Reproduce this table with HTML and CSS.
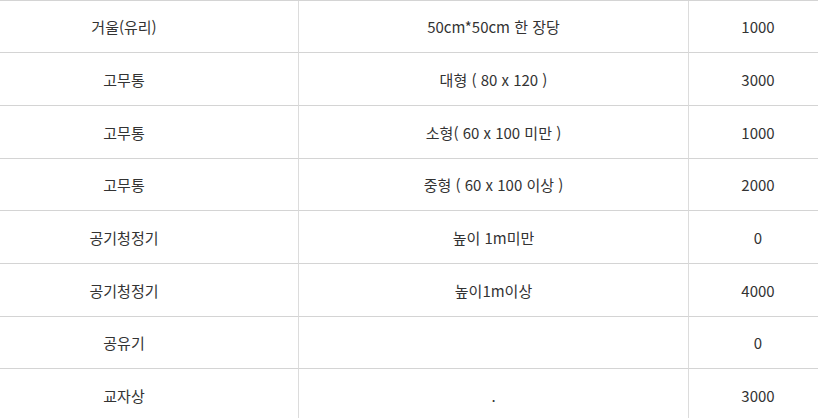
FILE: index.html
```html
<!DOCTYPE html>
<html lang="ko">
<head>
<meta charset="utf-8">
<link rel="stylesheet" href="styles.css">
</head>
<body>
<table class="price-table">
  <tbody>
    <tr class="r-short"><td class="c-name">거울(유리)</td><td class="c-desc">50cm*50cm 한 장당</td><td class="c-price">1000</td></tr>
    <tr><td class="c-name">고무통</td><td class="c-desc">대형 ( 80 x 120 )</td><td class="c-price">3000</td></tr>
    <tr><td class="c-name">고무통</td><td class="c-desc">소형( 60 x 100 미만 )</td><td class="c-price">1000</td></tr>
    <tr class="r-short"><td class="c-name">고무통</td><td class="c-desc">중형 ( 60 x 100 이상 )</td><td class="c-price">2000</td></tr>
    <tr><td class="c-name">공기청정기</td><td class="c-desc">높이 1m미만</td><td class="c-price">0</td></tr>
    <tr><td class="c-name">공기청정기</td><td class="c-desc">높이1m이상</td><td class="c-price">4000</td></tr>
    <tr class="r-short"><td class="c-name">공유기</td><td class="c-desc"></td><td class="c-price">0</td></tr>
    <tr><td class="c-name">교자상</td><td class="c-desc">.</td><td class="c-price">3000</td></tr>
  </tbody>
</table>
</body>
</html>
```
FILE: styles.css
```css
html, body {
  margin: 0;
  padding: 0;
  background: #fff;
  overflow: hidden;
}
body {
  font-family: "Noto Sans CJK KR", "Noto Sans", sans-serif;
  font-size: 15px;
  color: #333;
}
.price-table {
  width: 818px;
  border-collapse: separate;
  border-spacing: 0;
  table-layout: fixed;
  border-top: 1px solid #d4d4d4;
}
.price-table td {
  height: 53px;
  box-sizing: border-box;
  padding: 0;
  text-align: center;
  vertical-align: middle;
  border-bottom: 1px solid #d4d4d4;
  white-space: nowrap;
}
.price-table .r-short td {
  height: 52px;
}
.c-name {
  width: 299px;
  padding-right: 50px !important;
  border-right: 1px solid #dcdcdc;
}
.c-desc {
  width: 390px;
  border-right: 1px solid #dcdcdc;
}
.c-price {
  padding-left: 9px !important;
}
```
